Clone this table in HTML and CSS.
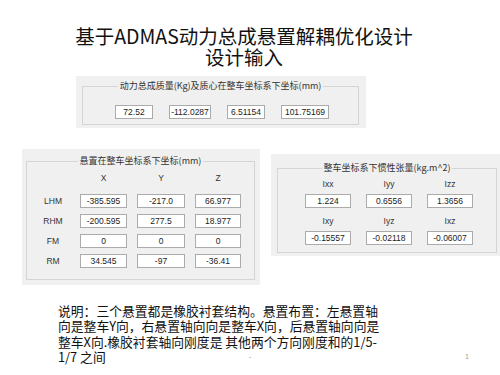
FILE: index.html
```html
<!DOCTYPE html>
<html lang="zh">
<head>
<meta charset="utf-8">
<title>设计输入</title>
<link rel="stylesheet" href="styles.css">
</head>
<body>
<div class="slide">
  <h1 class="title">基于ADMAS动力总成悬置解耦优化设计<br>设计输入</h1>

  <div class="panel panel-mass">
    <fieldset class="group">
      <legend class="legend">动力总成质量(Kg)及质心在整车坐标系下坐标(mm)</legend>
      <div class="mass-row">
        <div class="box w38">72.52</div>
        <div class="box w42">-112.0287</div>
        <div class="box w38">6.51154</div>
        <div class="box w48">101.75169</div>
      </div>
    </fieldset>
  </div>

  <div class="lower">
    <div class="panel panel-mount">
      <fieldset class="group">
        <legend class="legend">悬置在整车坐标系下坐标(mm)</legend>
        <div class="mount-grid">
          <div class="hdr"></div>
          <div class="hdr">X</div>
          <div class="hdr">Y</div>
          <div class="hdr">Z</div>

          <div class="rowlbl">LHM</div>
          <div class="box">-385.595</div>
          <div class="box">-217.0</div>
          <div class="box">66.977</div>

          <div class="rowlbl">RHM</div>
          <div class="box">-200.595</div>
          <div class="box">277.5</div>
          <div class="box">18.977</div>

          <div class="rowlbl">FM</div>
          <div class="box">0</div>
          <div class="box">0</div>
          <div class="box">0</div>

          <div class="rowlbl">RM</div>
          <div class="box">34.545</div>
          <div class="box">-97</div>
          <div class="box">-36.41</div>
        </div>
      </fieldset>
    </div>

    <div class="panel panel-inertia">
      <fieldset class="group">
        <legend class="legend">整车坐标系下惯性张量(kg.m^2)</legend>
        <div class="inertia-grid">
          <div class="lbl">Ixx</div>
          <div class="lbl">Iyy</div>
          <div class="lbl">Izz</div>
          <div class="box">1.224</div>
          <div class="box">0.6556</div>
          <div class="box">1.3656</div>
          <div class="lbl lbl-low">Ixy</div>
          <div class="lbl lbl-low">Iyz</div>
          <div class="lbl lbl-low">Ixz</div>
          <div class="box">-0.15557</div>
          <div class="box">-0.02118</div>
          <div class="box">-0.06007</div>
        </div>
      </fieldset>
    </div>
  </div>

  <p class="note">说明：三个悬置都是橡胶衬套结构。悬置布置：左悬置轴<br>向是整车Y向，右悬置轴向向是整车X向，后悬置轴向向是<br>整车X向.橡胶衬套轴向刚度是 其他两个方向刚度和的1/5-<br>1/7 之间</p>

  <span class="foot-mark">-</span>
  <span class="page-num">1</span>
</div>
</body>
</html>
```

FILE: styles.css
```css
html, body {
  margin: 0;
  padding: 0;
  background: #ffffff;
}

.slide {
  position: relative;
  width: 500px;
  height: 375px;
  overflow: hidden;
  padding-top: 25px;
  box-sizing: border-box;
}

.title {
  margin: 0;
  width: 488px;
  text-align: center;
  font-family: "Noto Sans CJK SC", "Noto Sans", sans-serif;
  font-weight: 400;
  font-size: 19.5px;
  line-height: 21px;
  color: #111111;
}

.panel {
  background: #f0f0f0;
  box-sizing: border-box;
  font-family: "Liberation Sans", "Noto Sans CJK SC", sans-serif;
  color: #2a2a2a;
}

.group {
  margin: 0;
  padding: 0;
  border: 1px solid #d4d4d4;
  min-width: 0;
}

.legend {
  margin-left: auto;
  margin-right: auto;
  padding: 0 2px;
  font-family: "Noto Sans CJK SC", "Liberation Sans", sans-serif;
  font-size: 9px;
  line-height: 10px;
  color: #333333;
}

.box {
  box-sizing: border-box;
  height: 14px;
  border: 1px solid #ababab;
  background: #ffffff;
  font-size: 8.5px;
  line-height: 12px;
  text-align: center;
  color: #222222;
  white-space: nowrap;
  overflow: hidden;
}

/* top panel */
.panel-mass {
  margin-top: 9px;
  margin-left: 76px;
  width: 290px;
  padding: 5px 7px 3px 6px;
}

.mass-row {
  display: flex;
  gap: 16px;
  padding: 14px 0 5px 32px;
}

.w38 { width: 38px; }
.w42 { width: 42px; }
.w48 { width: 48px; }

/* lower row */
.lower {
  display: flex;
  align-items: flex-start;
  gap: 11px;
  margin-top: 21px;
  margin-left: 22px;
}

.panel-mount {
  flex: none;
  width: 238px;
  padding: 7px 5px 5px 4px;
}

.mount-grid {
  display: grid;
  grid-template-columns: 43px 47px 48px 46px;
  grid-template-rows: 16px 14px 14px 14px 14px;
  column-gap: 10px;
  row-gap: 6px;
  padding: 6px 0 11px 0;
}

.hdr {
  font-size: 8.5px;
  line-height: 12px;
  text-align: center;
  color: #333333;
}

.rowlbl {
  font-size: 8.5px;
  line-height: 14px;
  text-align: center;
  padding-left: 9px;
  color: #333333;
}

.panel-inertia {
  flex: none;
  width: 235px;
  margin-top: 5px;
  padding: 9px 9px 3px 6px;
}

.inertia-grid {
  display: grid;
  grid-template-columns: 46px 46px 46px;
  grid-template-rows: 12px 14px 15px 14px;
  column-gap: 15px;
  row-gap: 4px;
  padding: 5px 0 7px 27px;
}

.lbl {
  font-size: 8.5px;
  line-height: 12px;
  text-align: center;
  color: #333333;
}

.lbl-low {
  align-self: end;
}

/* note */
.note {
  margin: 18px 0 0 58px;
  font-family: "Noto Sans CJK SC", "Noto Sans", sans-serif;
  font-size: 12.8px;
  line-height: 15.4px;
  color: #111111;
  white-space: nowrap;
}

.foot-mark,
.page-num {
  position: absolute;
  top: 352px;
  font-family: "Liberation Sans", sans-serif;
  font-size: 7px;
  line-height: 10px;
  color: #9a9a9a;
}

.foot-mark { left: 249px; }
.page-num { left: 465px; }
```
